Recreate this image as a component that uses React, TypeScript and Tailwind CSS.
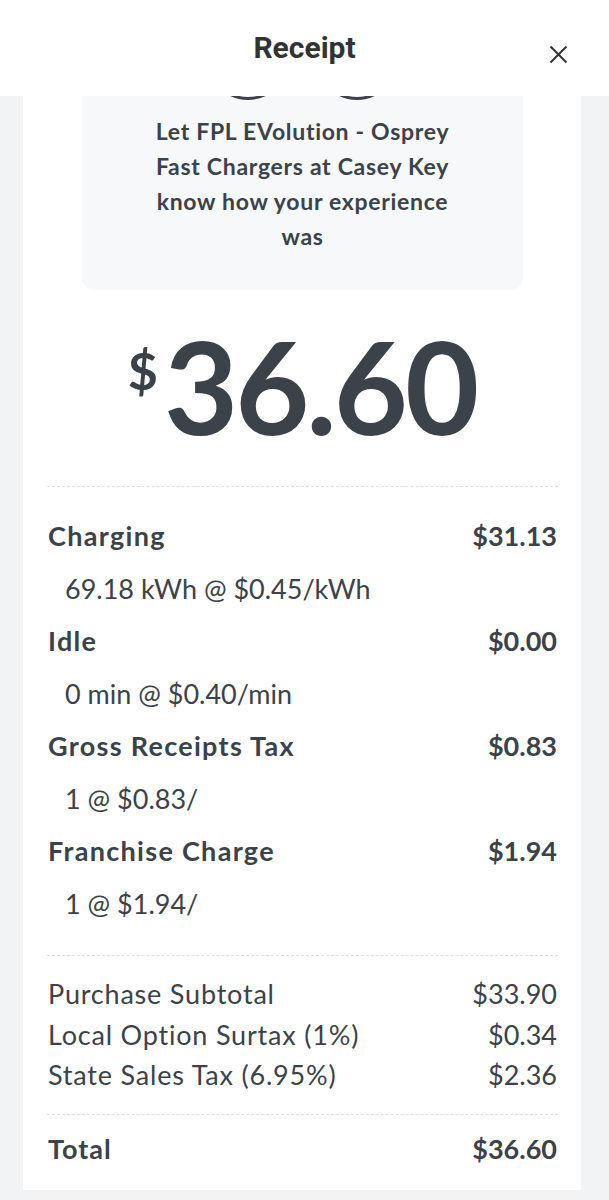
import React from 'react';

const items = [
  { name: 'Charging', amount: '$31.13', detail: '69.18 kWh @ $0.45/kWh' },
  { name: 'Idle', amount: '$0.00', detail: '0 min @ $0.40/min' },
  { name: 'Gross Receipts Tax', amount: '$0.83', detail: '1 @ $0.83/' },
  { name: 'Franchise Charge', amount: '$1.94', detail: '1 @ $1.94/' },
];

const totals = [
  { label: 'Purchase Subtotal', value: '$33.90' },
  { label: 'Local Option Surtax (1%)', value: '$0.34' },
  { label: 'State Sales Tax (6.95%)', value: '$2.36' },
];

const App: React.FC = () => {
  return (
    <div className="h-[1200px] w-[609px] overflow-hidden bg-[#f1f3f5] text-[#3c4249] font-['Lato',sans-serif]">
      <header className="relative h-[96px] bg-white flex items-center justify-center">
        <h1 className="font-['Roboto',sans-serif] font-bold text-[30px] text-[#333] -mt-[2px]">Receipt</h1>
        <button className="absolute right-[41px] top-[45px] text-[#333]">
          <svg width="19" height="19" viewBox="0 0 19 19" fill="none" stroke="currentColor" strokeWidth="2">
            <path d="M1.5 1.5 L17.5 17.5 M17.5 1.5 L1.5 17.5" />
          </svg>
        </button>
      </header>

      <main className="ml-[23px] w-[558px] bg-white h-[1094px]">
        <div className="ml-[59px] w-[441px] bg-[#f6f8fa] rounded-b-xl overflow-hidden pb-[36px]">
          <div className="flex justify-center gap-[29px] -mt-[76px]">
            <div className="h-[80px] w-[80px] rounded-full border-[3px] border-[#3c4249]" />
            <div className="h-[80px] w-[80px] rounded-full border-[3px] border-[#3c4249]" />
          </div>
          <p className="mt-[14px] px-[58px] text-center text-[23px] font-bold leading-[35px] tracking-[0.7px]">
            Let FPL EVolution - Osprey Fast Chargers at Casey Key know how your experience was
          </p>
        </div>

        <div className="mt-[32px] flex justify-center font-bold">
          <span className="text-[52px] leading-none mt-[22px] mr-[6px]">$</span>
          <span className="text-[128px] leading-none tracking-[-3px]">36.60</span>
        </div>

        <div className="ml-[24px] mr-[23px] mt-[36px] border-t border-dashed border-[#dcdfe3]" />

        <div className="ml-[25px] mr-[24px] mt-[23px]">
          {items.map((it) => (
            <div key={it.name}>
              <div className="flex justify-between font-bold text-[27px] leading-[52.5px]">
                <span className="tracking-[1.3px]">{it.name}</span>
                <span>{it.amount}</span>
              </div>
              <div className="pl-[17px] text-[27px] leading-[52.5px]">{it.detail}</div>
            </div>
          ))}
        </div>

        <div className="ml-[24px] mr-[23px] mt-[25px] border-t border-dashed border-[#dcdfe3]" />

        <div className="ml-[25px] mr-[24px] mt-[18px]">
          {totals.map((t) => (
            <div key={t.label} className="flex justify-between text-[27px] leading-[40.5px]">
              <span className="tracking-[0.8px]">{t.label}</span>
              <span>{t.value}</span>
            </div>
          ))}
        </div>

        <div className="ml-[24px] mr-[23px] mt-[18px] border-t border-dashed border-[#dcdfe3]" />

        <div className="ml-[25px] mr-[24px] mt-[14px] flex justify-between font-bold text-[27px] leading-[40px]">
          <span className="tracking-[1px]">Total</span>
          <span>$36.60</span>
        </div>
      </main>
    </div>
  );
};

export default App;
